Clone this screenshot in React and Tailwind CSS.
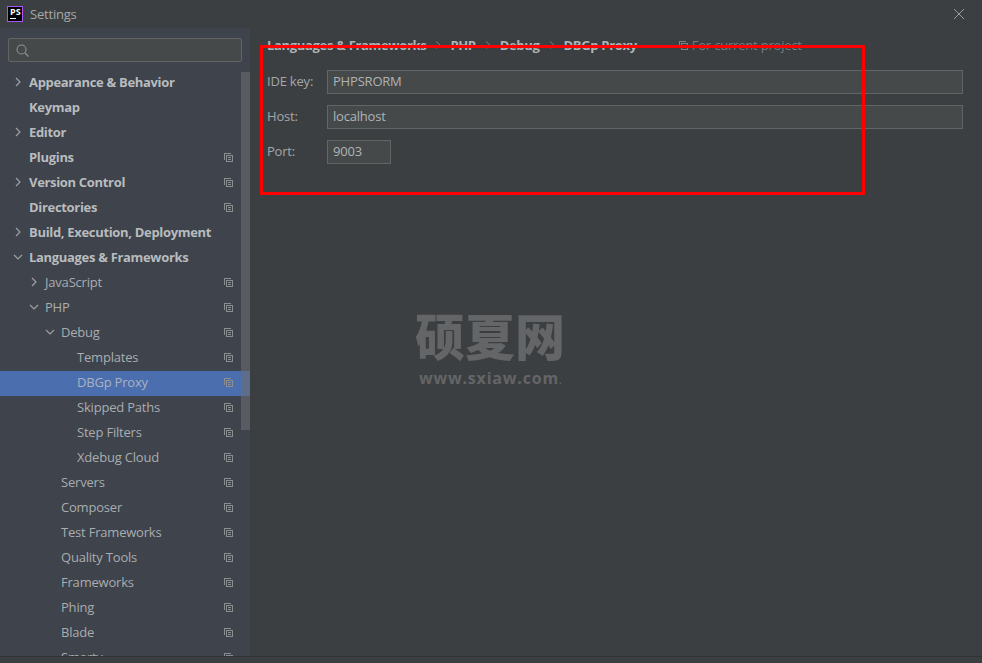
import React from "react";

const rows = [
  ["Appearance & Behavior", 0, "r", 1, 0],
  ["Keymap", 0, "", 1, 0],
  ["Editor", 0, "r", 1, 0],
  ["Plugins", 0, "", 1, 1],
  ["Version Control", 0, "r", 1, 1],
  ["Directories", 0, "", 1, 1],
  ["Build, Execution, Deployment", 0, "r", 1, 0],
  ["Languages & Frameworks", 0, "d", 1, 0],
  ["JavaScript", 1, "r", 0, 1],
  ["PHP", 1, "d", 0, 1],
  ["Debug", 2, "d", 0, 1],
  ["Templates", 3, "", 0, 1],
  ["DBGp Proxy", 3, "", 0, 1, true],
  ["Skipped Paths", 3, "", 0, 1],
  ["Step Filters", 3, "", 0, 1],
  ["Xdebug Cloud", 3, "", 0, 1],
  ["Servers", 2, "", 0, 1],
  ["Composer", 2, "", 0, 1],
  ["Test Frameworks", 2, "", 0, 1],
  ["Quality Tools", 2, "", 0, 1],
  ["Frameworks", 2, "", 0, 1],
  ["Phing", 2, "", 0, 1],
  ["Blade", 2, "", 0, 1],
  ["Smarty", 2, "", 0, 1],
];

const indent = ["pl-[29px]", "pl-[45px]", "pl-[61px]", "pl-[77px]"];
const arrowPos = ["left-[13px]", "left-[29px]", "left-[45px]", "left-[61px]"];

function Chevron({ dir, className }) {
  return (
    <svg width="10" height="10" viewBox="0 0 10 10" fill="none" stroke="#9da0a2" strokeWidth="1.2" className={className}>
      {dir === "r" ? <path d="M3 1l4 4-4 4" /> : <path d="M1 3l4 4 4-4" />}
    </svg>
  );
}

function CopyIcon({ className, color = "#8b8e90" }) {
  return (
    <svg width="9" height="9" viewBox="0 0 9 9" fill="none" stroke={color} strokeWidth="1" className={className} shapeRendering="crispEdges">
      <path d="M.5 6.5V.5H6.5" />
      <rect x="2.5" y="2.5" width="6" height="6" />
      <path d="M4 4.5h3M4 6.5h3" />
    </svg>
  );
}

function Row({ row }) {
  const [label, level, arrow, bold, copy, selected] = row;
  return (
    <div className={`relative flex h-[25px] shrink-0 items-center pb-[3px] pr-[17px] ${indent[level]} ${selected ? "bg-[#4b6eaf]" : ""}`}>
      {arrow && <Chevron dir={arrow} className={`absolute top-[6px] ${arrowPos[level]}`} />}
      <span className={`flex-1 whitespace-nowrap ${bold ? "font-bold tracking-[-0.32px] text-[#b9bcbe]" : selected ? "text-[#a9b2c2]" : "text-[#a9adaf]"}`}>{label}</span>
      {copy ? <CopyIcon className="mt-[1px]" /> : null}
    </div>
  );
}

function Field({ label, value, short }) {
  return (
    <div className="flex h-[24px] items-center">
      <span className="w-[60px] pb-[2px] text-[#a3a7a9]">{label}</span>
      <div className={`flex h-[24px] items-center border border-[#646464] bg-[#45494a] pb-[2px] pl-[5px] text-[#b0b4b6] ${short ? "w-[64px]" : "flex-1"}`}>{value}</div>
    </div>
  );
}

function Sep() {
  return (
    <svg width="24" height="10" viewBox="0 0 24 10" fill="none" stroke="#7f8284" strokeWidth="1" className="shrink-0">
      <path d="M10 1.5l4 3.5-4 3.5" />
    </svg>
  );
}

export default function App() {
  return (
    <div className="relative flex h-[663px] w-[982px] flex-col overflow-hidden bg-[#3c3f41] text-[13px] leading-[18px] tracking-[-0.2px] [font-family:'Open_Sans','Noto_Sans','Noto_Sans_CJK_SC',sans-serif]">
      <header className="flex h-[28px] shrink-0 items-center pl-[7px] pr-[17px]">
        <div className="relative h-[16px] w-[16px] border border-[#a855f7] bg-black">
          <span className="absolute left-[2px] top-[0px] text-[9px] font-bold leading-[9px] tracking-normal text-white">PS</span>
          <span className="absolute bottom-[2px] left-[2px] h-px w-[6px] bg-white" />
        </div>
        <span className="ml-[7px] flex-1 text-[#a4a8aa]">Settings</span>
        <svg width="12" height="12" viewBox="0 0 12 12" stroke="#9a9d9f" strokeWidth="1" fill="none">
          <path d="M1 1l10 10M11 1L1 11" />
        </svg>
      </header>

      <div className="flex min-h-0 flex-1">
        <aside className="relative flex w-[250px] shrink-0 flex-col overflow-hidden bg-[#3e434c]">
          <div className="flex h-[43px] shrink-0 items-start pl-[8px] pr-[8px] pt-[10px]">
            <div className="flex h-[24px] w-full items-center rounded-[2px] border border-[#646464] bg-[#45494a] pl-[7px]">
              <svg width="13" height="13" viewBox="0 0 13 13" fill="none" stroke="#8f9294" strokeWidth="1.1">
                <circle cx="5.5" cy="5.5" r="4.5" />
                <path d="M9 9l3.5 3.5" />
              </svg>
            </div>
          </div>
          {rows.map((r) => (
            <Row key={r[0]} row={r} />
          ))}
          <div className="absolute right-0 top-[44px] h-[358px] w-[9px] bg-[#6a6d72]/60" />
        </aside>

        <main className="min-w-0 flex-1 pl-[17px] pr-[19px] pt-[8px]">
          <div className="flex h-[18px] items-center whitespace-nowrap">
            <span className="font-bold tracking-[-0.32px] text-[#b0b4b6]">Languages &amp; Frameworks</span>
            <Sep />
            <span className="font-bold tracking-[-0.32px] text-[#b0b4b6]">PHP</span>
            <Sep />
            <span className="font-bold tracking-[-0.32px] text-[#b0b4b6]">Debug</span>
            <Sep />
            <span className="font-bold tracking-[-0.32px] text-[#b0b4b6]">DBGp Proxy</span>
            <CopyIcon className="ml-[42px]" color="#7f8284" />
            <span className="ml-[4px] text-[#787b7d]">For current project</span>
          </div>
          <div className="mt-[16px] flex flex-col gap-[11px]">
            <Field label="IDE key:" value="PHPSRORM" />
            <Field label="Host:" value="localhost" />
            <Field label="Port:" value="9003" short />
          </div>
        </main>
      </div>
      <div className="h-[7px] shrink-0 border-t border-[#323232] bg-[#3c3f41]" />

      <div className="absolute left-[260px] top-[45px] h-[150px] w-[605px] border-[3px] border-[#ff0000]" />

      <div className="absolute left-[415px] top-[303px] flex w-[160px] flex-col tracking-normal [font-family:'Noto_Sans_CJK_SC',sans-serif]">
        <span className="text-[50px] font-black leading-[62px] text-[#636567]">硕夏网</span>
        <span className="ml-[4px] mt-[3px] text-[16px] font-bold leading-[20px] tracking-[0.8px] text-[#636567] [font-family:'Open_Sans',sans-serif]">www.sxiaw.com<span className="text-[9px]">.</span></span>
      </div>
    </div>
  );
}
